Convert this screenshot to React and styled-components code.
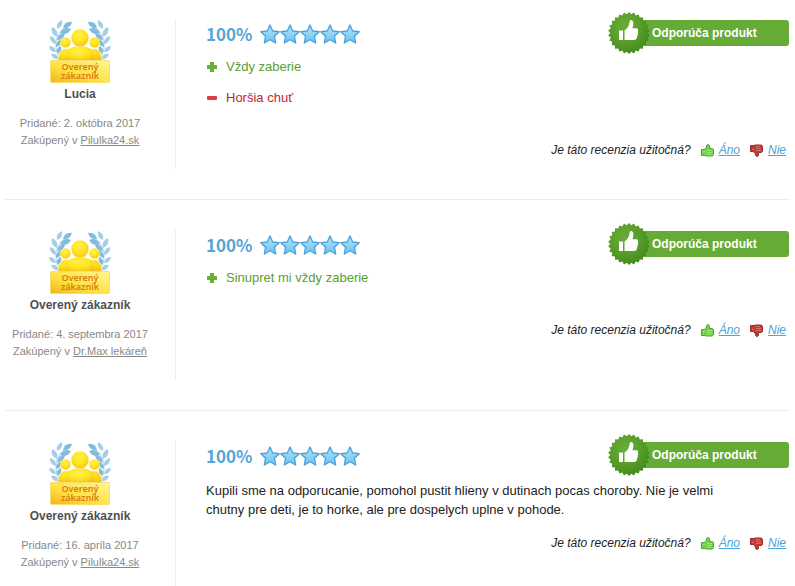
import React from 'react';
import styled, { createGlobalStyle } from 'styled-components';

const reviews = [
  {
    id: 1,
    author: 'Lucia',
    added: '2. októbra 2017',
    shop: 'Pilulka24.sk',
    rating: 100,
    pros: ['Vždy zaberie'],
    cons: ['Horšia chuť'],
  },
  {
    id: 2,
    author: 'Overený zákazník',
    added: '4. septembra 2017',
    shop: 'Dr.Max lekáreň',
    rating: 100,
    pros: ['Sinupret mi vždy zaberie'],
    cons: [],
  },
  {
    id: 3,
    author: 'Overený zákazník',
    added: '16. apríla 2017',
    shop: 'Pilulka24.sk',
    rating: 100,
    pros: [],
    cons: [],
    text: 'Kupili sme na odporucanie, pomohol pustit hlieny v dutinach pocas choroby. Nie je velmi chutny pre deti, je to horke, ale pre dospelych uplne v pohode.',
  },
];

// base x, base y, tip x, tip y
const leaves = [
  [14, 8, 23, 2],
  [8, 9, 13, 0],
  [11, 13, 22, 9],
  [8, 17, 3, 7],
  [8, 20, 16, 13],
  [7, 24, 1, 16],
  [7, 27, 13, 19],
  [7, 32, 0, 26],
  [8, 34, 12, 26],
  [10, 39, 2, 34],
];

function leafPath([x1, y1, x2, y2]) {
  const mx = (x1 + x2) / 2;
  const my = (y1 + y2) / 2;
  const dx = (y2 - y1) * 0.45;
  const dy = (x1 - x2) * 0.45;
  return `M${x1} ${y1}Q${mx + dx} ${my + dy} ${x2} ${y2}Q${mx - dx} ${my - dy} ${x1} ${y1}z`;
}

function Laurel() {
  return (
    <>
      <path d="M17 6C10 11 6 19 7 28c1 5 3 9 5 12" fill="none" stroke="#b5d7ea" />
      {leaves.map((leaf, index) => (
        <path key={index} d={leafPath(leaf)} fill={index % 2 ? '#a5cfe8' : '#83bbdd'} />
      ))}
    </>
  );
}

function VerifiedBadge() {
  return (
    <svg width="62" height="64" viewBox="0 0 62 64" role="img" aria-label="Overený zákazník">
      <defs>
        <radialGradient id="person" cx="0.45" cy="0.35" r="0.7">
          <stop offset="0" stopColor="#fff250" />
          <stop offset="0.5" stopColor="#ffe51f" />
          <stop offset="1" stopColor="#f3c01a" />
        </radialGradient>
        <linearGradient id="label" x1="0" y1="1" x2="1" y2="0">
          <stop offset="0" stopColor="#f0b41c" />
          <stop offset="0.4" stopColor="#ffe03c" />
          <stop offset="1" stopColor="#fff694" />
        </linearGradient>
      </defs>
      <g><Laurel /></g>
      <g transform="translate(62 0) scale(-1 1)"><Laurel /></g>
      <path
        d="M9 41c0-7 2-10 6-12h32c4 2 6 5 6 12z"
        fill="url(#person)"
        stroke="#fff4b0"
        strokeWidth="0.8"
      />
      <path d="M16 41c0-10 5-15 15-15s15 5 15 15z" fill="url(#person)" />
      <circle cx="16.500" cy="22.500" r="5.200" fill="url(#person)" stroke="#fff4b0" strokeWidth="0.600" />
      <circle cx="45.500" cy="22.500" r="5.200" fill="url(#person)" stroke="#fff4b0" strokeWidth="0.600" />
      <circle cx="31" cy="18" r="8.800" fill="url(#person)" stroke="#fff4b0" strokeWidth="0.600" />
      <rect x="1.500" y="40.500" width="59" height="22" rx="1" fill="url(#label)" stroke="#f8dd72" />
      <g
        fontFamily="'Noto Sans', 'Open Sans', sans-serif"
        fontSize="9"
        fontWeight="600"
        textAnchor="middle"
        fill="#d97c12"
      >
        <text x="31" y="50">Overený</text>
        <text x="31" y="59">zákazník</text>
      </g>
    </svg>
  );
}

function Stars() {
  return (
    <svg width="100" height="20" viewBox="0 0 100 20" role="img" aria-label="5 z 5">
      <defs>
        <linearGradient id="star" x1="0" y1="0" x2="0" y2="1">
          <stop offset="0" stopColor="#b4e4f8" />
          <stop offset="1" stopColor="#67c3ee" />
        </linearGradient>
      </defs>
      {[0, 20, 40, 60, 80].map((x) => (
        <path
          key={x}
          transform={`translate(${x} 0)`}
          d="M10 1l2.700 6 6.500.7-4.800 4.500 1.300 6.800L10 15.800l-5.700 3.200 1.300-6.800L.8 7.700l6.500-.7z"
          fill="url(#star)"
          stroke="#4a9fdd"
          strokeWidth="1.300"
          strokeLinejoin="round"
        />
      ))}
    </svg>
  );
}

const TEETH = 26;
const sealPoints = Array.from({ length: TEETH * 2 }, (_, i) => {
  const radius = i % 2 ? 18.8 : 21;
  const angle = (Math.PI * i) / TEETH;
  return `${21 + radius * Math.sin(angle)},${21 - radius * Math.cos(angle)}`;
}).join(' ');

function Seal() {
  return (
    <SealIcon width="42" height="42" viewBox="0 0 42 42" aria-hidden="true">
      <defs>
        <radialGradient id="seal" cx="0.4" cy="0.35" r="0.65">
          <stop offset="0" stopColor="#67ad36" />
          <stop offset="0.5" stopColor="#5ba02c" />
          <stop offset="1" stopColor="#458b1c" />
        </radialGradient>
      </defs>
      <polygon points={sealPoints} fill="url(#seal)" />
      <path
        d="M11 18.500h4v9.500h-4zM16.500 18.500c2.700-1.800 4.500-4.500 5-8 .2-2.200 1.200-2.700 2.300-2.300 2 .7 2 4.300.7 8h4c1.500.2 2 1.600 1.300 2.800.6 1 .5 2-.2 2.800.4 1 .1 2-.6 2.700.1 2.200-1 3.500-2.800 3.500h-9.700z"
        fill="#fff"
      />
    </SealIcon>
  );
}

function Thumb({ down }) {
  return (
    <svg width="13" height="13" viewBox="0 0 13 13" aria-hidden="true">
      <g transform={down ? 'translate(0 13) scale(1 -1)' : undefined}>
        <path
          d="M.5 5.500h3l2-2.500V1.500l1-1h1l1 1v3h3l1 1v5l-1 1.500h-7l-.5-.5H.5z"
          fill={down ? '#bf3a38' : '#74d24c'}
          stroke={down ? '#9c2c2c' : '#4aa832'}
        />
        <path
          d="M2 7.500h2M6 6.500h5M6 8.500h5M6 10.500h4"
          stroke={down ? '#d9706c' : '#98e670'}
        />
      </g>
    </svg>
  );
}

function Sign({ minus }) {
  return (
    <svg width="12" height="12" viewBox="0 0 12 12" aria-hidden="true">
      {minus ? (
        <rect x="1" y="4" width="10" height="4" rx="1" fill="#e03c40" />
      ) : (
        <path d="M4 1h4v3h3v4H8v3H4V8H1V4h3z" fill="#69b03a" />
      )}
    </svg>
  );
}

function Review({ review }) {
  const hasPoints = review.pros.length + review.cons.length > 0;
  return (
    <ReviewRow>
      <Author>
        <VerifiedBadge />
        <AuthorName>{review.author}</AuthorName>
        <Purchase>
          <div>Pridané: {review.added}</div>
          <div>Zakúpený v <a href="#shop">{review.shop}</a></div>
        </Purchase>
      </Author>
      <Content>
        <Header>
          <Rating>
            {review.rating}%
            <Stars />
          </Rating>
          <Recommend>
            <Seal />
            Odporúča produkt
          </Recommend>
        </Header>
        {hasPoints && (
          <Points>
            {review.pros.map((point) => (
              <Point key={point}><Sign />{point}</Point>
            ))}
            {review.cons.map((point) => (
              <Point key={point} $minus><Sign minus />{point}</Point>
            ))}
          </Points>
        )}
        {review.text && <Text>{review.text}</Text>}
        <Useful>
          Je táto recenzia užitočná?
          <Vote href="#yes"><Thumb /><span>Áno</span></Vote>
          <Vote href="#no"><Thumb down /><span>Nie</span></Vote>
        </Useful>
      </Content>
    </ReviewRow>
  );
}

export default function App() {
  return (
    <>
      <GlobalStyle />
      <ReviewList>
        {reviews.map((review) => (
          <Review key={review.id} review={review} />
        ))}
      </ReviewList>
    </>
  );
}

const GlobalStyle = createGlobalStyle`
  * {
    box-sizing: border-box;
  }
  body {
    margin: 0;
    background: #fff;
    color: #222;
    font-family: "Liberation Sans", Arial, sans-serif;
    font-size: 13px;
  }
  svg {
    display: block;
    flex-shrink: 0;
  }
`;

const ReviewList = styled.main`
  padding: 0 5px;
`;

const ReviewRow = styled.article`
  display: flex;
  align-items: flex-start;
  padding: 30px 0;
  border-bottom: 1px solid #ececec;
  &:first-child {
    padding-top: 19px;
  }
`;

const Author = styled.div`
  display: flex;
  flex-direction: column;
  align-items: center;
  width: 171px;
  min-height: 150px;
  padding: 1px 20px 0 0;
  border-right: 1px solid #ececec;
  flex-shrink: 0;
`;

const AuthorName = styled.div`
  margin-top: 1px;
  color: #505050;
  font-size: 12px;
  font-weight: 700;
  line-height: 18px;
`;

const Purchase = styled.div`
  margin-top: 12px;
  color: #888;
  font-size: 11px;
  line-height: 17px;
  text-align: center;
  a {
    color: inherit;
  }
`;

const Content = styled.div`
  flex: 1;
  padding-left: 30px;
`;

const Header = styled.div`
  display: flex;
  align-items: center;
  justify-content: space-between;
  height: 28px;
`;

const Rating = styled.div`
  display: flex;
  align-items: center;
  gap: 8px;
  padding-top: 2px;
  color: #55a5d3;
  font-family: "Noto Sans CJK SC", "Liberation Sans", sans-serif;
  font-size: 17px;
  font-weight: 700;
  line-height: 20px;
`;

const Recommend = styled.div`
  position: relative;
  width: 161px;
  height: 26px;
  padding-left: 24px;
  margin-right: 1px;
  border-radius: 3px;
  background: #66ab35;
  color: #fff;
  font-size: 12px;
  font-weight: 700;
  line-height: 26px;
`;

const SealIcon = styled.svg`
  position: absolute;
  top: -8px;
  left: -20px;
`;

const Points = styled.ul`
  display: flex;
  flex-direction: column;
  gap: 11px;
  margin: 10px 0 32px;
  padding: 0;
  list-style: none;
`;

const Point = styled.li`
  display: flex;
  align-items: center;
  gap: 8px;
  color: ${(props) => (props.$minus ? '#c4262e' : '#58a032')};
  font-size: 13px;
  line-height: 20px;
`;

const Text = styled.p`
  max-width: 540px;
  margin: 12px 0 14px;
  line-height: 19px;
`;

const Useful = styled.div`
  display: flex;
  align-items: center;
  justify-content: flex-end;
  gap: 10px;
  padding-right: 4px;
  font-size: 12px;
  font-style: italic;
  line-height: 20px;
`;

const Vote = styled.a`
  display: flex;
  align-items: center;
  gap: 5px;
  color: #4ba3d6;
  text-decoration: none;
  span {
    text-decoration: underline;
  }
`;
